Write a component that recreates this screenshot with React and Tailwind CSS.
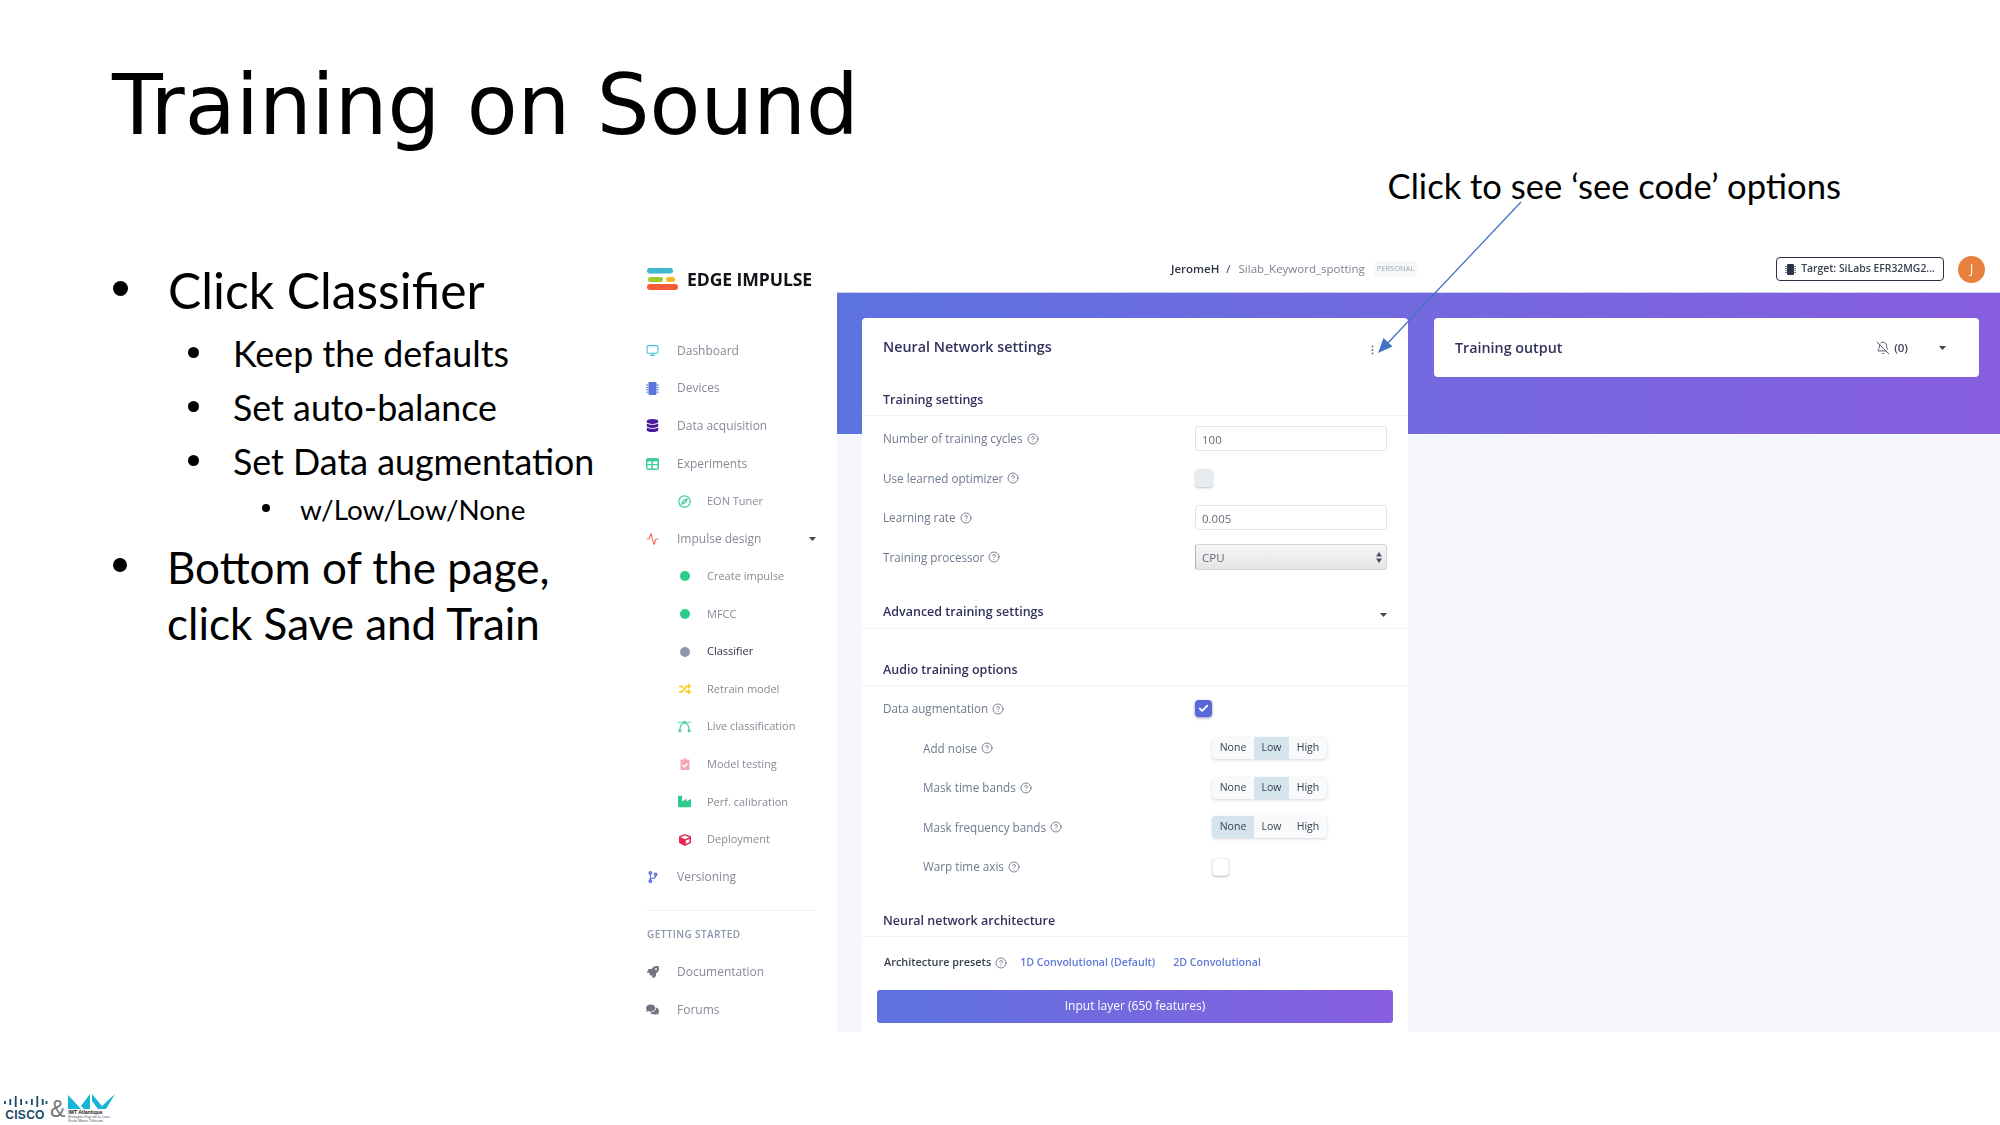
import React from "react";
import { CircleHelp, Monitor, Activity, BellOff, Check } from "lucide-react";
import {
  FaMicrochip,
  FaDatabase,
  FaRegCompass,
  FaRandom,
  FaClipboardCheck,
  FaIndustry,
  FaCube,
  FaCodeBranch,
  FaRocket,
  FaComments,
} from "react-icons/fa";

const Caret = () => (
  <svg width="7" height="4" viewBox="0 0 7 4" className="block shrink-0">
    <path d="M0 0h7L3.5 4z" fill="#3c4257" />
  </svg>
);

const Logo = () => (
  <svg width="33" height="24" viewBox="0 0 33 24" className="shrink-0">
    <rect x="1" y="1" width="26" height="5.5" rx="2.7" fill="#3fb8cf" />
    <rect x="2" y="10" width="15" height="5" rx="2.5" fill="#9ccb2b" />
    <rect x="20" y="10" width="9" height="5" rx="2.5" fill="#f6b71f" />
    <rect x="1" y="17" width="31" height="6" rx="3" fill="#f45b36" />
  </svg>
);

const GridIcon = () => (
  <svg width="13" height="12" viewBox="0 0 13 12">
    <rect width="13" height="12" rx="2" fill="#3fcf99" />
    <path d="M1.5 3.5h4v2.5h-4zM7 3.5h4.5v2.5H7zM1.5 7.2h4v3.3h-4zM7 7.2h4.5v3.3H7z" fill="white" />
  </svg>
);

const CurveIcon = () => (
  <svg width="14" height="13" viewBox="0 0 14 13" fill="none">
    <path d="M2 11C2 6 4 3 7 2c3 1 5 4 5 9" stroke="#55cfa6" strokeWidth="1.4" />
    <path d="M0 2h14" stroke="#55cfa6" strokeWidth="1" />
    <circle cx="2" cy="11" r="1.7" fill="#55cfa6" />
    <circle cx="12" cy="11" r="1.7" fill="#55cfa6" />
    <circle cx="7" cy="2" r="1.7" fill="#55cfa6" />
  </svg>
);

const NavItem = ({ icon, label, sub, active, right }) => (
  <div className={`flex h-[37.6px] items-center ${sub ? "pl-[48px]" : "pl-[16px]"} pr-[21px]`}>
    <span className={`flex h-[16px] w-[13px] shrink-0 items-center justify-center ${sub ? "mr-[16px]" : "mr-[18px]"}`}>{icon}</span>
    <span className={`${sub ? "text-[11px]" : "text-[12px]"} ${active ? "font-medium text-[#2b3245]" : "text-[#858b96]"}`}>{label}</span>
    {right && <span className="ml-auto">{right}</span>}
  </div>
);

const Dot = ({ color }) => <span className={`block h-[10px] w-[10px] rounded-full ${color}`} />;

const Sidebar = () => (
  <aside className="w-[207px] shrink-0 bg-white">
    <div className="flex h-[87px] items-start pl-[16px] pt-[22px]">
      <Logo />
      <span className="ml-[8px] mt-[1px] text-[17.6px] leading-[22px] font-bold tracking-[-0.1px] text-[#111318]">EDGE IMPULSE</span>
    </div>
    <NavItem icon={<Monitor size={15} color="#42c3d8" />} label="Dashboard" />
    <NavItem icon={<FaMicrochip size={13} color="#5a76dc" />} label="Devices" />
    <NavItem icon={<FaDatabase size={13} color="#4a1a9e" />} label="Data acquisition" />
    <NavItem icon={<GridIcon />} label="Experiments" />
    <NavItem sub icon={<FaRegCompass size={13} color="#3fcf99" />} label="EON Tuner" />
    <NavItem icon={<Activity size={14} color="#ef6a5a" />} label="Impulse design" right={<Caret />} />
    <NavItem sub icon={<Dot color="bg-[#2dcc8a]" />} label="Create impulse" />
    <NavItem sub icon={<Dot color="bg-[#2dcc8a]" />} label="MFCC" />
    <NavItem sub active icon={<Dot color="bg-[#8a97ae]" />} label="Classifier" />
    <NavItem sub icon={<FaRandom size={12} color="#f7d02c" />} label="Retrain model" />
    <NavItem sub icon={<CurveIcon />} label="Live classification" />
    <NavItem sub icon={<FaClipboardCheck size={12} color="#f3a6b8" />} label="Model testing" />
    <NavItem sub icon={<FaIndustry size={13} color="#2dcc8a" />} label="Perf. calibration" />
    <NavItem sub icon={<FaCube size={12} color="#e5274f" />} label="Deployment" />
    <NavItem icon={<FaCodeBranch size={12} color="#5a6fdc" />} label="Versioning" />
    <div className="ml-[16px] mr-[21px] mt-[14.5px] border-t border-[#eef0f4]" />
    <div className="mt-[15px] pl-[17px] text-[10px] leading-[16px] font-semibold tracking-[0.4px] text-[#8a97ae]">GETTING STARTED</div>
    <div className="mt-[11px]">
      <NavItem icon={<FaRocket size={12} color="#6f7480" />} label="Documentation" />
      <NavItem icon={<FaComments size={15} color="#6f7480" />} label="Forums" />
    </div>
  </aside>
);

const Help = () => <CircleHelp size={12} strokeWidth={1.6} color="#5b6577" className="ml-[4px] shrink-0" />;

const SectionHead = ({ title, h, pb, right }) => (
  <div className={`flex items-end justify-between border-b border-[#f1f3f7] pl-[21px] pr-[21px] ${h} ${pb}`}>
    <span className="text-[12.5px] leading-[18px] font-semibold text-[#32325d]">{title}</span>
    {right}
  </div>
);

const Row = ({ label, indent, children }) => (
  <div className={`flex h-[39.5px] items-center ${indent ? "pl-[61px]" : "pl-[21px]"}`}>
    <span className="pt-[1px] text-[11.7px] text-[#6f7a8e]">{label}</span>
    <Help />
    {children}
  </div>
);

const Field = ({ value }) => (
  <div className="ml-auto mr-[21px] flex h-[25px] w-[192px] items-center rounded-[3px] border border-[#dfe5ee] bg-white pl-[6px] pt-[1px] text-[11.5px] text-[#646d7d]">
    {value}
  </div>
);

const Seg = ({ active }) => (
  <div className="ml-auto mr-[81px] flex h-[22px] w-[115px] overflow-hidden rounded-[4px] bg-[#f8fafc] text-[10.5px] font-medium text-[#3a4150] shadow-[0_1px_3px_rgba(50,50,93,0.2)]">
    {["None", "Low", "High"].map((s, i) => (
      <span
        key={s}
        className={`flex items-center justify-center ${i === 0 ? "w-[42px]" : i === 1 ? "w-[35px]" : "w-[38px]"} ${active === s ? "bg-[#d5e3ec]" : ""}`}
      >
        {s}
      </span>
    ))}
  </div>
);

const SettingsCard = () => (
  <section className="h-[760px] w-[546px] shrink-0 rounded-t-[4px] bg-white">
    <div className="flex h-[58px] items-center justify-between pl-[21px] pr-[34px]">
      <span className="text-[14.3px] font-semibold text-[#32325d]">Neural Network settings</span>
      <svg width="3" height="10" viewBox="0 0 3 10" className="mt-[6px]">
        <circle cx="1.5" cy="1.5" r="1" fill="#6b7280" />
        <circle cx="1.5" cy="5" r="1" fill="#6b7280" />
        <circle cx="1.5" cy="8.5" r="1" fill="#6b7280" />
      </svg>
    </div>
    <SectionHead title="Training settings" h="h-[40px]" pb="pb-[6px]" />
    <div className="mt-[3px]">
      <Row label="Number of training cycles"><Field value="100" /></Row>
      <Row label="Use learned optimizer">
        <span className="ml-auto mr-[195px] h-[18px] w-[18px] rounded-[4px] bg-[#e9ecef] shadow-[0_1px_2px_rgba(50,50,93,0.3)]" />
      </Row>
      <Row label="Learning rate"><Field value="0.005" /></Row>
      <Row label="Training processor">
        <div className="ml-auto mr-[21px] flex h-[26px] w-[192px] items-center justify-between rounded-[3px] border border-[#cfd6e0] border-l-[#aab2bd] bg-linear-to-b from-[#f7f7f7] to-[#e4e4e4] pl-[6px] pr-[4px] text-[11.5px] text-[#646d7d]">
          CPU
          <svg width="6" height="11" viewBox="0 0 6 11">
            <path d="M3 0l3 4.4H0zM3 11L0 6.6h6z" fill="#4a5160" />
          </svg>
        </div>
      </Row>
    </div>
    <SectionHead title="Advanced training settings" h="h-[52px]" pb="pb-[7px]" right={<span className="mb-[4px]"><Caret /></span>} />
    <SectionHead title="Audio training options" h="h-[57px]" pb="pb-[6px]" />
    <div className="mt-[3px]">
      <Row label="Data augmentation">
        <span className="ml-auto mr-[196px] flex h-[17px] w-[17px] items-center justify-center rounded-[4px] bg-[#5a67d8] shadow-[0_1px_3px_rgba(50,50,93,0.5)]">
          <Check size={11} strokeWidth={4} color="white" />
        </span>
      </Row>
      <Row indent label="Add noise"><Seg active="Low" /></Row>
      <Row indent label="Mask time bands"><Seg active="Low" /></Row>
      <Row indent label="Mask frequency bands"><Seg active="None" /></Row>
      <Row indent label="Warp time axis">
        <span className="ml-auto mr-[179px] h-[18px] w-[17px] rounded-[4px] border border-[#eef0f4] bg-white shadow-[0_1px_2px_rgba(50,50,93,0.3)]" />
      </Row>
    </div>
    <SectionHead title="Neural network architecture" h="h-[50px]" pb="pb-[6px]" />
    <div className="flex h-[50px] items-center pl-[22px] pt-[2px] font-semibold">
      <span className="text-[10.9px] text-[#3a4150]">Architecture presets</span>
      <Help />
      <span className="ml-[13px] text-[10.6px] text-[#5f79d8]">1D Convolutional (Default)</span>
      <span className="ml-[18px] text-[10.6px] text-[#5f79d8]">2D Convolutional</span>
    </div>
    <div className="mx-[15px] mt-[3px] flex h-[33px] items-center justify-center rounded-[3px] bg-linear-to-r from-[#5c73e0] to-[#875edf] text-[12px] font-medium text-white">
      Input layer (650 features)
    </div>
  </section>
);

const OutputCard = () => (
  <section className="flex h-[59px] w-[545px] shrink-0 items-center rounded-[4px] bg-white pl-[21px] pr-[33px]">
    <span className="text-[14.3px] font-semibold text-[#32325d]">Training output</span>
    <BellOff size={14} strokeWidth={1.5} color="#3c4257" className="ml-auto" />
    <span className="ml-[4px] text-[11.5px] font-semibold text-[#3c4257]">(0)</span>
    <span className="ml-[31px]"><Caret /></span>
  </section>
);

const AppShot = () => (
  <div className="flex h-[787px] flex-1 overflow-hidden blur-[0.4px]" style={{ fontFamily: '"Open Sans", sans-serif' }}>
    <Sidebar />
    <div className="flex-1 bg-[#f4f6fb]">
      <div className="flex h-[48px] items-center border-b border-[#c9cde0] bg-white pr-[15px] pt-[1px] text-[11.5px]">
        <span className="ml-[334px] font-semibold text-[#2b3245]">JeromeH</span>
        <span className="ml-[7px] text-[#3a4150]">/</span>
        <span className="ml-[8px] text-[#7a8190]">Silab_Keyword_spotting</span>
        <span className="ml-[9px] rounded-[3px] bg-[#f6f8fa] px-[3px] py-[2px] text-[7.5px] font-medium text-[#9aa5b5]">PERSONAL</span>
        <span className="ml-auto flex h-[24px] w-[168px] items-center justify-center rounded-[4px] border border-[#2b3245] text-[10.4px] font-semibold text-[#3a4150]">
          <FaMicrochip size={11} color="#2b3245" className="mr-[5px]" />
          Target: SiLabs EFR32MG2...
        </span>
        <span className="ml-[14px] flex h-[27px] w-[27px] items-center justify-center rounded-full bg-[#e8803f] text-[12px] text-white">J</span>
      </div>
      <div className="h-[141px] bg-linear-to-r from-[#5c73e0] to-[#875edf]" />
      <div className="-mt-[116px] flex gap-[26px] pl-[25px]">
        <SettingsCard />
        <OutputCard />
      </div>
    </div>
  </div>
);

const Bullet = ({ level = 0, text = "text-[44px]", dot = "h-[14px] w-[14px]", children }) => {
  const rows = [
    "pl-[113px] leading-[56px]",
    "pl-[188px] text-[35.8px] leading-[44px]",
    "pl-[262px] text-[27.8px] leading-[36px]",
  ];
  const dots = ["mt-[19px] mr-[40px]", "h-[11px] w-[11px] mt-[15px] mr-[34px]", "h-[8px] w-[8px] mt-[12px] mr-[30px]"];
  return (
    <div className={`flex items-start text-black ${rows[level]} ${level === 0 ? text : ""}`}>
      <span className={`shrink-0 rounded-full bg-black ${dots[level]} ${level === 0 ? dot : ""}`} />
      <span>{children}</span>
    </div>
  );
};

const BulletList = () => (
  <div className="w-[630px] shrink-0 pt-[17px]" style={{ fontFamily: "Lato, sans-serif" }}>
    <Bullet text="text-[49.8px]" dot="h-[15px] w-[15px]">Click Classifier</Bullet>
    <div className="mt-[14px] flex flex-col gap-[10px]">
      <Bullet level={1}>Keep the defaults</Bullet>
      <Bullet level={1}>Set auto-balance</Bullet>
      <Bullet level={1}>Set Data augmentation</Bullet>
    </div>
    <div className="mt-[8px]">
      <Bullet level={2}>w/Low/Low/None</Bullet>
    </div>
    <div className="mt-[11px]">
      <Bullet>
        Bottom of the page,
        <br />
        click Save and Train
      </Bullet>
    </div>
  </div>
);

const FooterLogos = () => (
  <div className="flex h-[93px] items-end pb-[2px] pl-[2px]">
    <div className="mb-[3px] flex w-[46px] flex-col items-center">
      <svg width="45" height="11" viewBox="0 0 45 11">
        {[[1, 5, 3], [6.4, 3, 6], [11.8, 0, 11], [17.2, 3, 6], [22.6, 5, 3], [28, 3, 6], [33.4, 0, 11], [38.8, 3, 6], [42.6, 5, 3]].map(([x, y, h]) => (
          <rect key={x} x={x} y={y} width="1.8" height={h} fill="#1b4a66" />
        ))}
      </svg>
      <span className="mt-[3px] text-[12px] leading-[10px] font-bold tracking-[0.3px] text-[#1b4a66]" style={{ fontFamily: '"Liberation Sans", sans-serif' }}>CISCO</span>
    </div>
    <span className="mb-[1px] ml-[2px] text-[23px] leading-[26px] text-[#777]" style={{ fontFamily: '"Liberation Sans", sans-serif' }}>&amp;</span>
    <div className="ml-[3px] flex flex-col">
      <svg width="47" height="15" viewBox="0 0 47 15">
        <path d="M0 15V1l13 14zM13 12L22 0v15h-6zM24 0l10 12L47 0l-9 15h-8l-6-8z" fill="#17b4d6" />
      </svg>
      <span className="mt-[1px] text-[5px] leading-[5px] font-bold text-[#222]" style={{ fontFamily: '"Liberation Sans", sans-serif' }}>IMT Atlantique</span>
      <span className="text-[3.6px] leading-[4px] text-[#555]" style={{ fontFamily: '"Liberation Sans", sans-serif' }}>
        Bretagne-Pays de la Loire
        <br />
        École Mines-Télécom
      </span>
    </div>
  </div>
);

export default function App() {
  return (
    <div className="relative flex h-[1125px] w-[2000px] flex-col overflow-hidden bg-white">
      <header className="flex h-[245px] shrink-0 items-start justify-between">
        <h1 className="mt-[54px] ml-[112px] text-[83.2px] leading-[104px] text-black" style={{ fontFamily: '"DejaVu Sans", sans-serif' }}>
          Training on Sound
        </h1>
        <div className="mt-[163px] mr-[159px] text-[34.6px] leading-[46px] text-black" style={{ fontFamily: "Lato, sans-serif" }}>
          Click to see ‘see code’ options
        </div>
      </header>
      <div className="flex flex-1">
        <BulletList />
        <AppShot />
      </div>
      <FooterLogos />
      <svg className="pointer-events-none absolute inset-0" width="2000" height="1125" viewBox="0 0 2000 1125">
        <line x1="1521" y1="202" x2="1385" y2="346" stroke="#4472c4" strokeWidth="1.3" />
        <path d="M1378 353l5.5-15 9 8.5z" fill="#4472c4" />
      </svg>
    </div>
  );
}
